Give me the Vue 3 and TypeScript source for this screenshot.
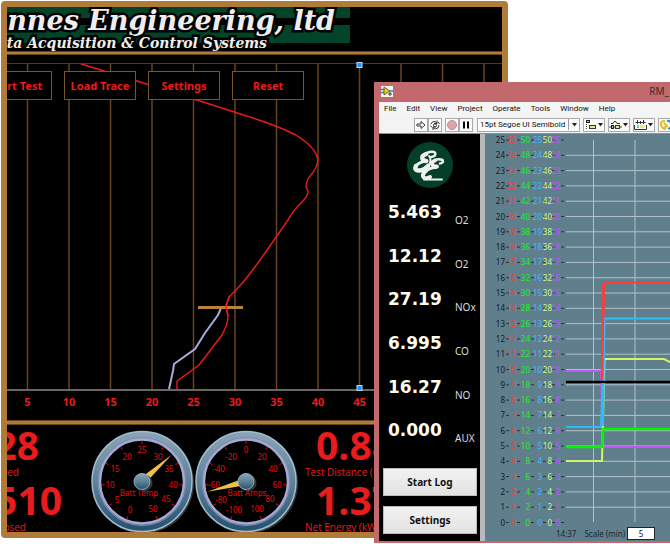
<script setup lang="ts">
import { ref } from 'vue'

interface Tick {
  label: string
  x: number
  y: number
}
interface Gauge {
  name: string
  ticks: Tick[]
  needle: number
  nameX: number
}

const speedMarks = [5, 10, 15, 20, 25, 30, 35, 40, 45]
const gridColumns = Array.from({ length: 12 }, (_, i) => 20.5 + i * 41.5)

const labelSpots = [
  [40, 85], [27, 75], [20, 60], [25, 44], [37, 32], [52, 25],
  [68, 32], [79, 44], [83, 60], [76, 74], [63, 84],
]
const placeTicks = (labels: string[]): Tick[] =>
  labels.map((label, i) => ({ label, x: labelSpots[i][0], y: labelSpots[i][1] }))

const gauges: Gauge[] = [
  {
    name: 'Batt Temp',
    ticks: placeTicks(['0', '5', '10', '15', '20', '25', '30', '35', '40', '45', '50']),
    needle: 48,
    nameX: 49,
  },
  {
    name: 'Batt Amps',
    ticks: placeTicks(['-100', '-80', '-60', '-40', '-20', '0', '20', '40', '60', '80', '100']),
    needle: -105,
    nameX: 53,
  },
]
const tickAngles = Array.from({ length: 11 }, (_, i) => -158 + i * 31.6)

const menus = ['File', 'Edit', 'View', 'Project', 'Operate', 'Tools', 'Window', 'Help']

const readings = [
  { value: '5.463', unit: 'O2' },
  { value: '12.12', unit: 'O2' },
  { value: '27.19', unit: 'NOx' },
  { value: '6.995', unit: 'CO' },
  { value: '16.27', unit: 'NO' },
  { value: '0.000', unit: 'AUX' },
]

const scales = [
  { color: '#141c20', right: 20, factor: 1 },
  { color: '#f04448', right: 31, factor: 1 },
  { color: '#1cf01c', right: 45, factor: 2 },
  { color: '#44b8fa', right: 57, factor: 1 },
  { color: '#ccfa7c', right: 67, factor: 2 },
  { color: '#c055f4', right: 75, factor: 1 },
]
const dashes = [21, 32, 46, 58, 67, 76]
const rows = Array.from({ length: 26 }, (_, i) => ({ n: 25 - i, y: 6 + i * 15.3 }))

const scaleMinutes = ref('5')
const font = ref('15pt Segoe UI Semibold')
</script>

<template>
  <div class="desktop">
    <section class="dyno">
      <header class="banner">
        <div class="brand">
          <h1>nnes Engineering, ltd</h1>
          <p>ta Acquisition &amp; Control Systems</p>
        </div>
      </header>
      <div class="divider"></div>
      <div class="plot">
        <svg class="plot-area">
          <line v-for="x in gridColumns" :key="x" class="grid-line" :x1="x" :x2="x" y1="0" y2="100%" />
          <path class="target" d="M74 0L130 17L193 37L221 46L255 57Q283 67 292 73Q309 84 311 96Q310 104 304 111Q299 116 299 123L301 127Q302 131 294 139Q285 148 281 156L274 166L258 189L245 207L237 217L230 225L222 233L219 242L221 252Q221 260 215 271L192 301L170 317L170 325" />
          <path class="actual" d="M162 325L166 307L167 300L188 285L198 269L211 251L214 244" />
          <line class="cursor" x1="191" x2="236" y1="243.500" y2="243.500" />
          <path class="target" d="M222 233L219 242L221 252" />
          <rect class="handle" x="350" y="-1.500" width="5" height="5" />
          <rect class="handle" x="350" y="321.500" width="5" height="5" />
        </svg>
        <div class="commands">
          <button type="button">Start Test</button>
          <button type="button">Load Trace</button>
          <button type="button">Settings</button>
          <button type="button">Reset</button>
        </div>
      </div>
      <svg class="speed-axis">
        <text v-for="(m, i) in speedMarks" :key="m" :x="gridColumns[i]" y="15">{{ m }}</text>
      </svg>
      <div class="divider thick"></div>
      <div class="dash">
        <div class="stats left">
          <strong class="speed-value">28</strong>
          <span class="speed-label">eed</span>
          <strong class="elapsed-value">510</strong>
          <span class="elapsed-label">psed</span>
        </div>
        <svg v-for="g in gauges" :key="g.name" class="gauge" width="104" height="107" viewBox="0 0 104 107">
          <defs>
            <linearGradient id="bezel" x1="0" y1="0" x2="0" y2="1">
              <stop offset="0" stop-color="#8ba5b5" />
              <stop offset="0.5" stop-color="#5f8299" />
              <stop offset="1" stop-color="#254f6e" />
            </linearGradient>
          </defs>
          <circle cx="53.500" cy="58" r="50.500" fill="#343434" />
          <circle cx="52" cy="56.500" r="50" fill="url(#bezel)" stroke="#9fbdd0" stroke-width="1.500" />
          <circle cx="52" cy="56.500" r="44" fill="none" stroke="#7491ab" stroke-width="1" />
          <circle cx="52" cy="56.500" r="42" fill="#000" stroke="#a9a6d4" stroke-width="2.500" />
          <line
            v-for="a in tickAngles"
            :key="a"
            class="tick"
            x1="52"
            x2="52"
            y1="16"
            y2="19"
            :transform="`rotate(${a} 52 56.5)`"
          />
          <text v-for="t in g.ticks" :key="t.label" :x="t.x" :y="t.y + 3">{{ t.label }}</text>
          <path d="M49 49L52 16.500L55 49Z" fill="#efc047" :transform="`rotate(${g.needle} 52 56.5)`" />
          <circle cx="54" cy="58" r="8.500" fill="#333" />
          <circle cx="52" cy="56.500" r="8" fill="url(#bezel)" stroke="#8fb0c4" />
          <text :x="g.nameX" y="71">{{ g.name }}</text>
        </svg>
        <div class="stats right">
          <strong>0.88</strong>
          <span>Test Distance (</span>
          <strong>1.37</strong>
          <span>Net Energy (kW</span>
        </div>
      </div>
    </section>

    <section class="monitor">
      <header class="title-bar">
        <svg width="12" height="11" viewBox="0 0 12 11">
          <rect width="12" height="11" fill="#f4f4ee" />
          <path d="M0 3.500h4M0 6.500h4M8 5h4" stroke="#2087c0" stroke-width="1.500" />
          <path d="M3 1l6 4l-6 4z" fill="#f3c41d" stroke="#54522d" stroke-width="0.800" />
          <path d="M7 8h4M9 6v4" stroke="#3d3d3d" />
        </svg>
        <h2>RM_</h2>
      </header>
      <nav class="menu">
        <a v-for="m in menus" :key="m" href="#">{{ m }}</a>
      </nav>
      <div class="toolbar">
        <button type="button" class="run" aria-label="Run">
          <svg width="12" height="12" viewBox="0 0 12 12">
            <path d="M2 5h4V2.500L10 6L6 9.500V7H2z" fill="#fff" stroke="#333" />
          </svg>
        </button>
        <button type="button" aria-label="Run continuously">
          <svg width="12" height="12" viewBox="0 0 12 12" fill="none" stroke="#333">
            <path d="M2 5Q3 2 6 2.500L8 4M8 1.500V4.500H5M10 6Q10 9.500 6.500 10L4 8.500M4 11V8H7M1.500 6.500L3 8.500M10.500 5L9 3" />
            <circle cx="6" cy="6.300" r="1.500" />
          </svg>
        </button>
        <button type="button" class="abort" aria-label="Abort">
          <svg width="12" height="12" viewBox="0 0 12 12">
            <circle cx="6" cy="6" r="4.500" fill="#dda5a7" stroke="#b59293" />
          </svg>
        </button>
        <button type="button" aria-label="Pause">
          <svg width="12" height="12" viewBox="0 0 12 12">
            <path d="M3 2.500h2v7H3zM7 2.500h2v7H7z" fill="#000" />
          </svg>
        </button>
        <div class="font-picker">
          <select v-model="font" aria-label="Font">
            <option>15pt Segoe UI Semibold</option>
          </select>
          <svg width="11" height="11" viewBox="0 0 11 11">
            <path d="M0.500 0v11" stroke="#999" />
            <path d="M4 4h5l-2.500 3.500z" fill="#222" />
          </svg>
        </div>
        <button type="button" class="wide" aria-label="Align objects">
          <svg width="20" height="12" viewBox="0 0 20 12">
            <path d="M2.500 1v10" stroke="#444" stroke-dasharray="1 1" />
            <rect x="2.500" y="1.500" width="3" height="2" fill="#78c8d8" stroke="#222" />
            <rect x="5.500" y="6.500" width="6" height="3" fill="#f3e58b" stroke="#333" />
            <path d="M1 9.500h4M14 4h5l-2.500 3.500z" fill="#222" />
          </svg>
        </button>
        <button type="button" class="wide" aria-label="Distribute objects">
          <svg width="20" height="12" viewBox="0 0 20 12">
            <path d="M0 8h13" stroke="#444" />
            <path d="M2 4.500h2Q6 0 8 4.500h3" stroke="#333" fill="none" />
            <rect x="2.500" y="6.500" width="2" height="3" fill="#78c8d8" stroke="#222" />
            <rect x="6.500" y="6.500" width="4" height="3" fill="#f3e58b" stroke="#333" />
            <path d="M14 4h5l-2.500 3.500z" fill="#222" />
          </svg>
        </button>
        <button type="button" class="wide" aria-label="Resize objects">
          <svg width="20" height="12" viewBox="0 0 20 12">
            <path d="M1.500 3.500h10M3.500 1v4M6.500 2v3M9.500 1v4M0.500 6v4.500h12V6" stroke="#333" fill="none" />
            <rect x="3" y="6" width="2" height="3" fill="#78c8d8" />
            <rect x="6" y="6" width="5" height="3" fill="#f3e58b" />
            <path d="M14 4h5l-2.500 3.500z" fill="#222" />
          </svg>
        </button>
        <button type="button" class="wide" aria-label="Reorder">
          <svg width="20" height="12" viewBox="0 0 20 12" fill="none" stroke-width="2">
            <path d="M6 2Q1 2 2 6T7 10M5 4L8 7L5 9" stroke="#e0bd20" />
            <path d="M8 2Q12 1 12 6T9 9" stroke="#2596bf" />
          </svg>
        </button>
      </div>
      <div class="workspace">
        <aside class="panel">
          <svg class="emblem" width="46" height="46" viewBox="0 0 46 46">
            <circle cx="23" cy="23" r="23" fill="#044027" />
            <g fill="none" stroke="#f0f0ec" stroke-linecap="round" stroke-linejoin="round">
              <path stroke-width="2.500" d="M24 15Q30 14 28 10.500Q25 9 20 11" />
              <path stroke-width="4.500" d="M19 12Q14 14 15.500 17Q16 18.500 19 19" />
              <path stroke-width="3" d="M20 19Q12 20 9 24" />
              <path stroke-width="4.500" d="M9 24Q7 28 11 28.500Q17 29 21 24" />
              <path stroke-width="2.500" d="M33 21.500Q37 21 35.500 18Q32 16.500 28 18" />
              <path stroke-width="4" d="M28 18.500Q24 20 25.500 23Q26.500 24.500 30 24.500" />
              <path stroke-width="3" d="M29 25.500Q22 26 19 29" />
              <path stroke-width="4" d="M19 29Q14 33 17 35.500Q19 37 23 35" />
              <path stroke-width="2" d="M17 37.500H35M22 14Q25 18 22 23" />
            </g>
          </svg>
          <dl class="readings">
            <div v-for="(r, i) in readings" :key="i">
              <dd>{{ r.value }}</dd>
              <dt>{{ r.unit }}</dt>
            </div>
          </dl>
          <div class="actions">
            <button type="button">Start Log</button>
            <button type="button">Settings</button>
          </div>
        </aside>
        <div class="chart">
          <svg class="traces">
            <g v-for="r in rows" :key="r.n">
              <line v-if="r.n > 0 && r.n < 25" class="rule" x1="81" x2="100%" :y1="r.y" :y2="r.y" />
              <path class="minus" :d="dashes.map((x) => `M${x} ${r.y}h3`).join('')" />
              <text v-for="s in scales" :key="s.right" :x="s.right" :y="r.y + 3" :fill="s.color">{{ r.n * s.factor }}</text>
            </g>
            <path class="rule" d="M108.500 6V388M150 6V388" />
            <g fill="none" stroke-width="2">
              <path stroke="#c455f4" d="M81 237H116L118 313H2000" />
              <path stroke="#ff3c3c" d="M117 248L119 148.500H2000" />
              <path stroke="#d0f56a" d="M81 327H117L119.500 225H179L185 228L240 250" />
              <path stroke="#32bbfa" d="M81 293H116L118 240" />
              <path stroke="#32bbfa" d="M118 292L119.500 184.500H2000" />
              <path stroke="#ff3c3c" stroke-width="2.500" d="M117 246L118.500 149" />
              <path stroke="#000" stroke-width="2.500" d="M81 248H2000" />
              <path stroke="#32bbfa" d="M117 292L118 249" />
              <path stroke="#00f500" stroke-width="2.500" d="M81 313H117L118.500 295H2000" />
            </g>
          </svg>
          <footer class="chart-foot">
            <time>14:37</time>
            <label for="scale">Scale (min)</label>
            <input id="scale" v-model="scaleMinutes" type="text" />
          </footer>
        </div>
      </div>
    </section>
  </div>
</template>

<style>
body {
  background: #fff;
}
</style>

<style scoped>
.desktop,
.desktop * {
  box-sizing: border-box;
}
.desktop {
  position: relative;
  min-height: 100vh;
  overflow: hidden;
  font-family: "Noto Sans", "Open Sans", sans-serif;
}
h1,
h2,
p,
dl,
dd {
  margin: 0;
}
button {
  font-family: inherit;
  padding: 0;
}

.dyno {
  position: absolute;
  left: 1px;
  top: 1px;
  right: 162px;
  bottom: 6px;
  display: flex;
  flex-direction: column;
  overflow: hidden;
  border: 6px solid #b07b38;
  border-radius: 4px;
  background: #000;
}
.banner {
  height: 44px;
  overflow: hidden;
}
.brand {
  display: flex;
  flex-direction: column;
  align-items: flex-end;
  width: 343px;
  height: 44px;
  padding-right: 15px;
  background: linear-gradient(#024428 11px, #000 11px 18px, #024428 18px 36px, #000 36px);
  color: #eee;
  font-family: "DejaVu Serif", serif;
  font-style: italic;
  font-weight: bold;
  white-space: nowrap;
  -webkit-text-stroke: 5px #000;
  paint-order: stroke fill;
}
.brand h1 {
  font-size: 27px;
  line-height: 27px;
}
.brand p {
  margin-right: 68px;
  font-size: 14px;
  line-height: 18px;
}
.divider {
  height: 4px;
  flex: none;
  background: #b07b38;
  border: solid #63451f;
  border-width: 1px 0;
}
.divider.thick {
  height: 5px;
}
.plot {
  position: relative;
  display: flex;
  flex: 1;
  min-height: 0;
  margin-top: 8px;
  border-top: 1px solid #3c3c3c;
  border-bottom: 2px solid #666;
}
.plot-area {
  width: 100%;
  overflow: visible;
}
.grid-line {
  stroke: #64451f;
  stroke-width: 1.5px;
}
.target {
  fill: none;
  stroke: #ec1a1a;
  stroke-width: 1.4px;
}
.actual {
  fill: none;
  stroke: #aaaadc;
  stroke-width: 2px;
}
.cursor {
  stroke: #b9823a;
  stroke-width: 3px;
}
.handle {
  fill: #1e90ff;
  stroke: #b8dcff;
}
.commands {
  position: absolute;
  left: -27px;
  top: 7px;
  display: flex;
  gap: 12px;
}
.commands button {
  width: 72px;
  height: 29px;
  border: 1px solid #79542a;
  background: #000;
  color: #ec1a1a;
  font-size: 11px;
  font-weight: bold;
}
.speed-axis {
  width: 100%;
  height: 29px;
  flex: none;
}
.speed-axis text {
  fill: #ec1a1a;
  font-size: 11px;
  font-weight: bold;
  text-anchor: middle;
}
.dash {
  display: flex;
  height: 107px;
  flex: none;
  overflow: hidden;
}
.stats {
  display: flex;
  flex-direction: column;
  color: #e81c1c;
  font-family: "Open Sans", sans-serif;
  white-space: nowrap;
}
.stats strong {
  font-size: 39px;
  line-height: 40px;
}
.stats span {
  font-size: 10px;
  line-height: 15px;
}
.stats.left {
  align-items: flex-end;
  width: 83px;
}
.stats.right {
  flex: 1;
  padding-left: 7px;
}
.stats.right strong {
  padding-left: 11px;
}
.speed-value {
  margin-right: 51px;
}
.speed-label {
  margin-right: 71px;
}
.elapsed-value {
  margin-right: 28px;
}
.elapsed-label {
  margin-right: 64px;
}
.gauge {
  flex: none;
}
.gauge text {
  fill: #f00808;
  font-size: 8px;
  text-anchor: middle;
}
.tick {
  stroke: #e00808;
}

.monitor {
  position: absolute;
  left: 374px;
  top: 82px;
  right: 0;
  bottom: 1px;
  display: flex;
  flex-direction: column;
  overflow: hidden;
  padding: 0 0 2px 5px;
  background: #c1696d;
}
.title-bar {
  display: flex;
  align-items: center;
  justify-content: space-between;
  height: 20px;
  flex: none;
  padding: 0 1px 2px 2px;
}
.title-bar h2 {
  color: #40282a;
  font-size: 10px;
  font-weight: normal;
}
.menu {
  display: flex;
  gap: 10px;
  height: 14px;
  flex: none;
  padding-left: 5px;
  background: #f5f5f5;
}
.menu a {
  color: #111;
  font-family: Roboto, sans-serif;
  font-size: 8px;
  line-height: 13px;
  text-decoration: none;
}
.toolbar {
  display: flex;
  align-items: center;
  height: 17px;
  flex: none;
  overflow: hidden;
  padding-left: 35px;
  background: #f3f3f3;
}
.toolbar button {
  display: flex;
  align-items: center;
  justify-content: center;
  width: 14px;
  height: 14px;
  flex: none;
  border: 1px solid #aaa;
  background: #fafafa;
}
.toolbar .abort {
  margin-left: 3px;
}
.toolbar .wide {
  width: 22px;
  margin-left: 3px;
}
.toolbar button svg {
  flex: none;
}
.font-picker {
  display: flex;
  align-items: center;
  width: 103px;
  height: 14px;
  flex: none;
  margin-left: 4px;
  border: 1px solid #aaa;
  background: #fafafa;
}
.font-picker svg {
  flex: none;
}
.font-picker select {
  flex: 1;
  min-width: 0;
  height: 12px;
  padding: 0 0 0 2px;
  border: 0;
  background: transparent;
  color: #111;
  font-family: Roboto, sans-serif;
  font-size: 8px;
  appearance: none;
}
.workspace {
  display: flex;
  flex: 1;
  min-height: 0;
  border-top: 1px solid #8d9294;
}
.panel {
  display: flex;
  flex-direction: column;
  width: 101px;
  flex: none;
  background: #000;
}
.emblem {
  margin: 8px 0 0 28px;
  flex: none;
}
.readings {
  display: flex;
  flex: 1;
  flex-direction: column;
  padding-top: 12px;
}
.readings > div {
  display: flex;
  flex: 1;
  padding-left: 9px;
}
.readings dd {
  width: 67px;
  color: #fffdee;
  font-family: "DejaVu Sans", sans-serif;
  font-size: 17px;
  font-weight: bold;
  line-height: 24px;
}
.readings dt {
  padding-top: 12px;
  color: #ddd;
  font-size: 10px;
  line-height: 16px;
}
.actions {
  display: flex;
  flex-direction: column;
  gap: 10px;
  padding: 6px 3px 7px 4px;
}
.actions button {
  height: 28px;
  border: 1px solid #bdbdbd;
  background: linear-gradient(#f2f2f2, #e2e2e2);
  color: #111;
  font-size: 10px;
  font-weight: bold;
}
.chart {
  display: flex;
  flex: 1;
  flex-direction: column;
  min-width: 0;
  border-left: 5px solid #b7b9ba;
  background: #607f8d;
}
.traces {
  flex: 1;
  width: 100%;
  min-height: 0;
}
.traces text {
  font-size: 8px;
  text-anchor: end;
}
.rule {
  fill: none;
  stroke: #b2c2ca;
}
.minus {
  stroke: #27343b;
}
.chart-foot {
  display: flex;
  align-items: center;
  height: 15px;
  flex: none;
  padding-left: 71px;
  color: #1c262c;
  font-size: 8px;
}
.chart-foot label {
  margin-left: 8px;
}
.chart-foot input {
  width: 28px;
  height: 13px;
  margin-left: 2px;
  padding: 0;
  border: 1px solid #222;
  background: #fff;
  color: #111;
  font-family: inherit;
  font-size: 8px;
  text-align: center;
}
</style>
